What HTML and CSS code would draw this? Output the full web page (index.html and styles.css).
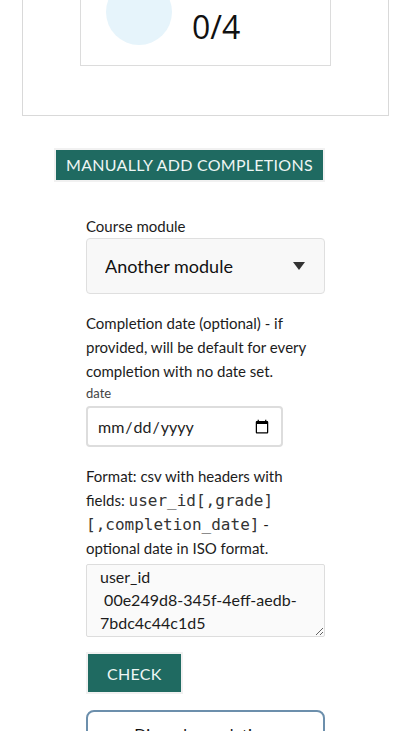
FILE: index.html
```html
<!DOCTYPE html>
<html lang="en">
<head>
<meta charset="utf-8">
<title>Manually add completions</title>
<link rel="stylesheet" href="styles.css">
</head>
<body>
<div class="page">
  <div class="stats-card">
    <div class="stat-box">
      <div class="chart"></div>
      <div class="stat-value">0/4</div>
    </div>
  </div>

  <h2 class="section-title">Manually add completions</h2>

  <form class="form">
    <div class="field">
      <label class="label" for="module">Course module</label>
      <div class="select-wrap">
        <select id="module" class="select">
          <option>Another module</option>
        </select>
        <span class="select-arrow"></span>
      </div>
    </div>

    <div class="field">
      <p class="help">Completion date (optional) - if provided, will be default for every completion with no date set.</p>
      <label class="small-label" for="date">date</label>
      <input id="date" class="date-input" type="date">
    </div>

    <div class="field">
      <p class="help">Format: csv with headers with fields: <code>user_id[,grade][,completion_date]</code> - optional date in ISO format.</p>
      <textarea class="csv">user_id
 00e249d8-345f-4eff-aedb-7bdc4c44c1d5</textarea>
    </div>

    <div class="actions">
      <button type="button" class="btn-primary">Check</button>
    </div>

    <button type="button" class="btn-outline">Discard completions</button>
  </form>
</div>
</body>
</html>
```

FILE: styles.css
```css
html, body {
  margin: 0;
  padding: 0;
  background: #ffffff;
}

body {
  font-family: Lato, "Noto Sans", sans-serif;
  color: #1c1c1c;
  overflow: hidden;
}

.page {
  width: 411px;
}

.stats-card {
  margin: -100px 22px 0 22px;
  padding: 39px 0 49px 57px;
  border: 1px solid #d9d9d9;
}

.stat-box {
  border: 1px solid #dcdcdc;
  padding: 38px 0 20px 25px;
  box-sizing: border-box;
  width: 251px;
  height: 126px;
  display: flex;
  align-items: flex-start;
}

.chart {
  width: 66px;
  height: 66px;
  border-radius: 50%;
  background: #e6f4fb;
  flex: none;
}

.stat-value {
  font-family: "Open Sans", "Noto Sans", sans-serif;
  font-size: 32px;
  line-height: 36px;
  color: #111;
  margin: 30px 0 0 20px;
}

.section-title {
  display: inline-block;
  margin: 32px 0 0 54px;
  padding: 0 10px;
  border: 2px solid #f1f1f1;
  background: #1f6a61;
  color: #eef6f4;
  font-size: 16px;
  font-weight: 400;
  line-height: 30px;
  text-transform: uppercase;
  letter-spacing: 0.28px;
}

.form {
  margin: 32px 0 0 86px;
  width: 239px;
  display: flex;
  flex-direction: column;
  gap: 17px;
}

.field {
  display: flex;
  flex-direction: column;
}

.label {
  font-size: 15px;
  line-height: 24px;
}

.select-wrap {
  position: relative;
}

.select {
  -webkit-appearance: none;
  appearance: none;
  width: 100%;
  height: 56px;
  margin: 0;
  padding: 0 0 0 18px;
  border: 1px solid #dfdfdf;
  border-radius: 4px;
  background: #f8f8f8;
  font-family: Lato, "Noto Sans", sans-serif;
  font-size: 18px;
  color: #111;
}

.select-arrow {
  position: absolute;
  right: 20px;
  top: 24px;
  width: 0;
  height: 0;
  border-left: 6.5px solid transparent;
  border-right: 6.5px solid transparent;
  border-top: 8px solid #333;
  pointer-events: none;
}

.help {
  margin: 0;
  font-size: 15px;
  line-height: 24px;
  color: #1c1c1c;
}

.help code {
  font-family: "DejaVu Sans Mono", "Liberation Mono", monospace;
  font-size: 16px;
  line-height: 16px;
  color: #333;
}

.small-label {
  font-size: 13px;
  line-height: 20px;
  color: #444;
}

.date-input {
  margin: 3px 0 0 0;
  width: 197px;
  height: 41px;
  box-sizing: border-box;
  padding: 0 9px;
  border: 2px solid #dddddd;
  border-radius: 4px;
  background: #fff;
  font-family: Lato, "Noto Sans", sans-serif;
  font-size: 16px;
  color: #222;
}

.csv {
  display: block;
  margin: 4px 0 0 0;
  width: 239px;
  height: 73px;
  box-sizing: border-box;
  padding: 0 13px;
  border: 1px solid #dddddd;
  border-radius: 2px;
  background: #fafafa;
  font-family: Lato, "Noto Sans", sans-serif;
  font-size: 16px;
  line-height: 23px;
  color: #1c1c1c;
  overflow: hidden;
}

.actions {
  margin-top: -2px;
  display: flex;
}

.btn-primary {
  margin: 0;
  padding: 0 19px;
  height: 42px;
  border: 2px solid #f1f1f1;
  background: #1f6a61;
  color: #eef6f4;
  font-family: Lato, "Noto Sans", sans-serif;
  font-size: 16px;
  letter-spacing: 0.3px;
  text-transform: uppercase;
}

.btn-outline {
  width: 239px;
  margin: -1px 0 0 0;
  padding: 10px 12px;
  border: 2px solid #6c8fac;
  border-radius: 8px;
  background: #fff;
  font-family: Lato, "Noto Sans", sans-serif;
  font-size: 16px;
  line-height: 24px;
  color: #111;
}
```
